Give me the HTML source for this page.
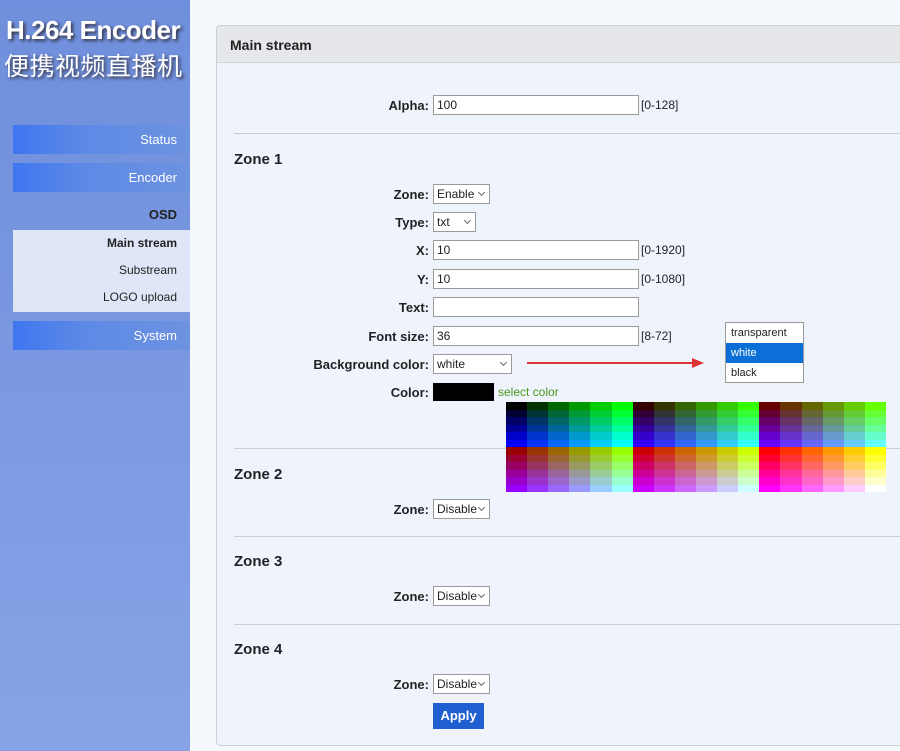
<!DOCTYPE html>
<html><head><meta charset="utf-8"><style>
*{box-sizing:border-box;margin:0;padding:0}
body{width:900px;height:751px;overflow:hidden;background:#f5f8fd;font-family:"Liberation Sans",Arial,sans-serif;position:relative;font-size:13px;color:#222}
.side{position:absolute;left:0;top:0;width:190px;height:751px;background:linear-gradient(180deg,#6f8fdc,#86a3e6)}
.t1{position:absolute;left:6px;top:15px;font:bold 26px "Liberation Sans",sans-serif;color:#fff;text-shadow:2px 2px 3px #334;letter-spacing:-0.5px;white-space:nowrap}
.t2{position:absolute;left:4px;top:48px;font:25px "Noto Sans CJK SC",sans-serif;color:#fff;text-shadow:2px 2px 3px #334;line-height:34px;white-space:nowrap;letter-spacing:0.5px}
.btn{position:absolute;left:13px;width:177px;height:29px;background:linear-gradient(90deg,#3f76f0,#5d8ae6 40%,#6d92e0);color:#fff;text-align:right;padding-right:13px;line-height:29px;font-size:13px}
.sub{position:absolute;left:13px;top:230px;width:177px;height:82px;background:#dfe6f7}
.si{position:absolute;right:13px;font-size:12px;color:#222}
.panel{position:absolute;left:216px;top:25px;width:700px;height:721px;border:1px solid #c9cfd9;border-radius:4px;background:#eef3fc;overflow:hidden}
.ph{height:37px;background:#e6e7ea;border-bottom:1px solid #d0d4da;font-weight:bold;font-size:14px;padding:11px 13px}
.a{position:absolute}
.lbl{position:absolute;right:471px;font-weight:bold;font-size:13px;text-align:right;white-space:nowrap}
.in{position:absolute;left:433px;width:206px;height:20px;background:#fff;border:1px solid #9a9a9a;padding:2px 3px;font-size:12px}
.sel{position:absolute;left:433px;height:20px;background:#fff;border:1px solid #9a9a9a;padding:2px 3px;font-size:12px}
.sel:after{content:"";position:absolute;right:5px;top:5px;width:4px;height:4px;border-right:1px solid #666;border-bottom:1px solid #666;transform:rotate(45deg)}
.rng{position:absolute;left:641px;font-size:12px}
.hr{position:absolute;left:234px;width:666px;height:1px;background:#c9ced6}
.h{position:absolute;left:234px;font-weight:bold;font-size:15px}
</style></head><body>
<div class="side">
<div class="t1">H.264 Encoder</div>
<div class="t2">便携视频直播机</div>
<div class="btn" style="top:125px">Status</div>
<div class="btn" style="top:163px">Encoder</div>
<div class="a" style="right:13px;top:207px;font-weight:bold;color:#222;font-size:13px">OSD</div>
<div class="sub"></div>
<div class="si" style="top:236px;font-weight:bold">Main stream</div>
<div class="si" style="top:263px">Substream</div>
<div class="si" style="top:290px">LOGO upload</div>
<div class="btn" style="top:321px">System</div>
</div>
<div class="a" style="left:183px;top:236px;width:0;height:0;border:7px solid transparent;border-right-color:#f5f8fd"></div>
<div class="panel"><div class="ph">Main stream</div></div>
<div class="lbl" style="top:98px">Alpha:</div><div class="in" style="top:95px">100</div><div class="rng" style="top:98px">[0-128]</div>
<div class="hr" style="top:133px"></div>
<div class="h" style="top:151px">Zone 1</div>
<div class="lbl" style="top:187px">Zone:</div><div class="sel" style="top:184px;width:57px">Enable</div>
<div class="lbl" style="top:215px">Type:</div><div class="sel" style="top:212px;width:43px">txt</div>
<div class="lbl" style="top:243px">X:</div><div class="in" style="top:240px">10</div><div class="rng" style="top:243px">[0-1920]</div>
<div class="lbl" style="top:272px">Y:</div><div class="in" style="top:269px">10</div><div class="rng" style="top:272px">[0-1080]</div>
<div class="lbl" style="top:300px">Text:</div><div class="in" style="top:297px"></div>
<div class="lbl" style="top:329px">Font size:</div><div class="in" style="top:326px">36</div><div class="rng" style="top:329px">[8-72]</div>
<div class="lbl" style="top:357px">Background color:</div><div class="sel" style="top:354px;width:79px">white</div>
<div class="a" style="left:527px;top:362px;width:170px;height:2px;background:#d33"></div>
<div class="a" style="left:692px;top:358px;border:5px solid transparent;border-left:12px solid #d33"></div>
<div class="a" style="left:725px;top:322px;width:79px;height:61px;border:1px solid #999;background:#fff;font-size:11px">
<div style="height:20px;padding:4px 5px">transparent</div>
<div style="height:20px;padding:4px 5px;background:#0a6fd6;color:#fff">white</div>
<div style="height:19px;padding:4px 5px">black</div></div>
<div class="lbl" style="top:385px">Color:</div><div class="a" style="left:433px;top:383px;width:61px;height:18px;background:#000"></div>
<div class="a" style="left:498px;top:385px;color:#4a9a1a;font-size:12px">select color</div>
<div class="hr" style="top:448px"></div>
<div id="pal" class="a" style="left:506px;top:402px;width:380px;height:90px;display:grid;grid-template-columns:repeat(18,1fr);grid-template-rows:repeat(12,1fr)"></div>
<div class="h" style="top:466px">Zone 2</div>
<div class="lbl" style="top:502px">Zone:</div><div class="sel" style="top:499px;width:57px">Disable</div>
<div class="hr" style="top:536px"></div>
<div class="h" style="top:553px">Zone 3</div>
<div class="lbl" style="top:589px">Zone:</div><div class="sel" style="top:586px;width:57px">Disable</div>
<div class="hr" style="top:624px"></div>
<div class="h" style="top:641px">Zone 4</div>
<div class="lbl" style="top:677px">Zone:</div><div class="sel" style="top:674px;width:57px">Disable</div>
<div class="a" style="left:433px;top:703px;width:51px;height:26px;background:#1f5fcf;color:#fff;font-weight:bold;font-size:13px;text-align:center;line-height:26px">Apply</div>
<script>
var h=['00','33','66','99','cc','ff'],p=document.getElementById('pal'),s='';
for(var r=0;r<12;r++)for(var c=0;c<18;c++){var R=(r<6?0:3)+Math.floor(c/6);s+='<div style="background:#'+h[R]+h[c%6]+h[r%6]+'"></div>';}
p.innerHTML=s;
</script>
</body></html>
